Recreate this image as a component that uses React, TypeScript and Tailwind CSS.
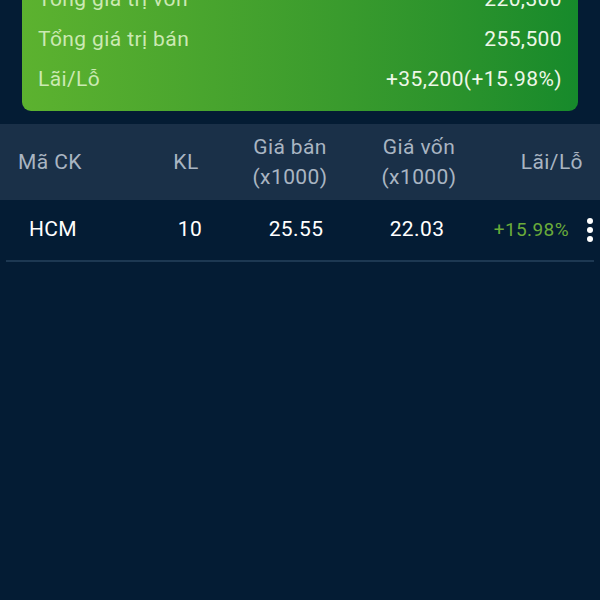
const summary = [
  { label: 'Tổng giá trị vốn', value: '220,300' },
  { label: 'Tổng giá trị bán', value: '255,500' },
  { label: 'Lãi/Lỗ', value: '+35,200(+15.98%)' },
];

const MoreIcon = () => (
  <div className="ml-[18px] flex flex-col gap-[3px]">
    <span className="block h-[6px] w-[6px] rounded-full bg-white" />
    <span className="block h-[6px] w-[6px] rounded-full bg-white" />
    <span className="block h-[6px] w-[6px] rounded-full bg-white" />
  </div>
);

const App = (): JSX.Element => {
  return (
    <div
      className="h-[600px] w-[600px] overflow-hidden bg-[#041c34] tracking-[0.4px]"
      style={{ fontFamily: 'Roboto, "Noto Sans", sans-serif' }}
    >
      <div className="mx-[22px] mt-[-20px] rounded-b-[9px] bg-linear-to-r from-[#5cb22f] to-[#168a2b] px-[16px] pb-[11px]">
        {summary.map((row) => (
          <div key={row.label} className="flex h-[40px] items-center justify-between text-[21px]">
            <span className="text-[#cbe9b3]">{row.label}</span>
            <span className="text-[#eef7e8]">{row.value}</span>
          </div>
        ))}
      </div>

      <div className="mt-[13px] flex h-[76px] items-center bg-[#1a3048] text-[21px] leading-[30px] text-[#a9b5c2]">
        <div className="w-[100px] text-center">Mã CK</div>
        <div className="ml-[30px] w-[112px] text-center">KL</div>
        <div className="w-[96px] text-center">
          Giá bán
          <br />
          (x1000)
        </div>
        <div className="ml-[32px] w-[98px] text-center">
          Giá vốn
          <br />
          (x1000)
        </div>
        <div className="flex-1 pr-[17px] text-right">Lãi/Lỗ</div>
      </div>

      <div className="flex h-[60px] items-center text-[21px] text-white">
        <div className="w-[106px] text-center">HCM</div>
        <div className="ml-[26px] w-[116px] text-center">10</div>
        <div className="w-[96px] text-center">25.55</div>
        <div className="ml-[24px] w-[98px] text-center">22.03</div>
        <div className="flex flex-1 items-center justify-end pr-[7px]">
          <span className="text-[19px] text-[#6aab3a]">+15.98%</span>
          <MoreIcon />
        </div>
      </div>
      <div className="mx-[6px] h-[2px] bg-[#1d3852]" />
    </div>
  );
};

export default App;
